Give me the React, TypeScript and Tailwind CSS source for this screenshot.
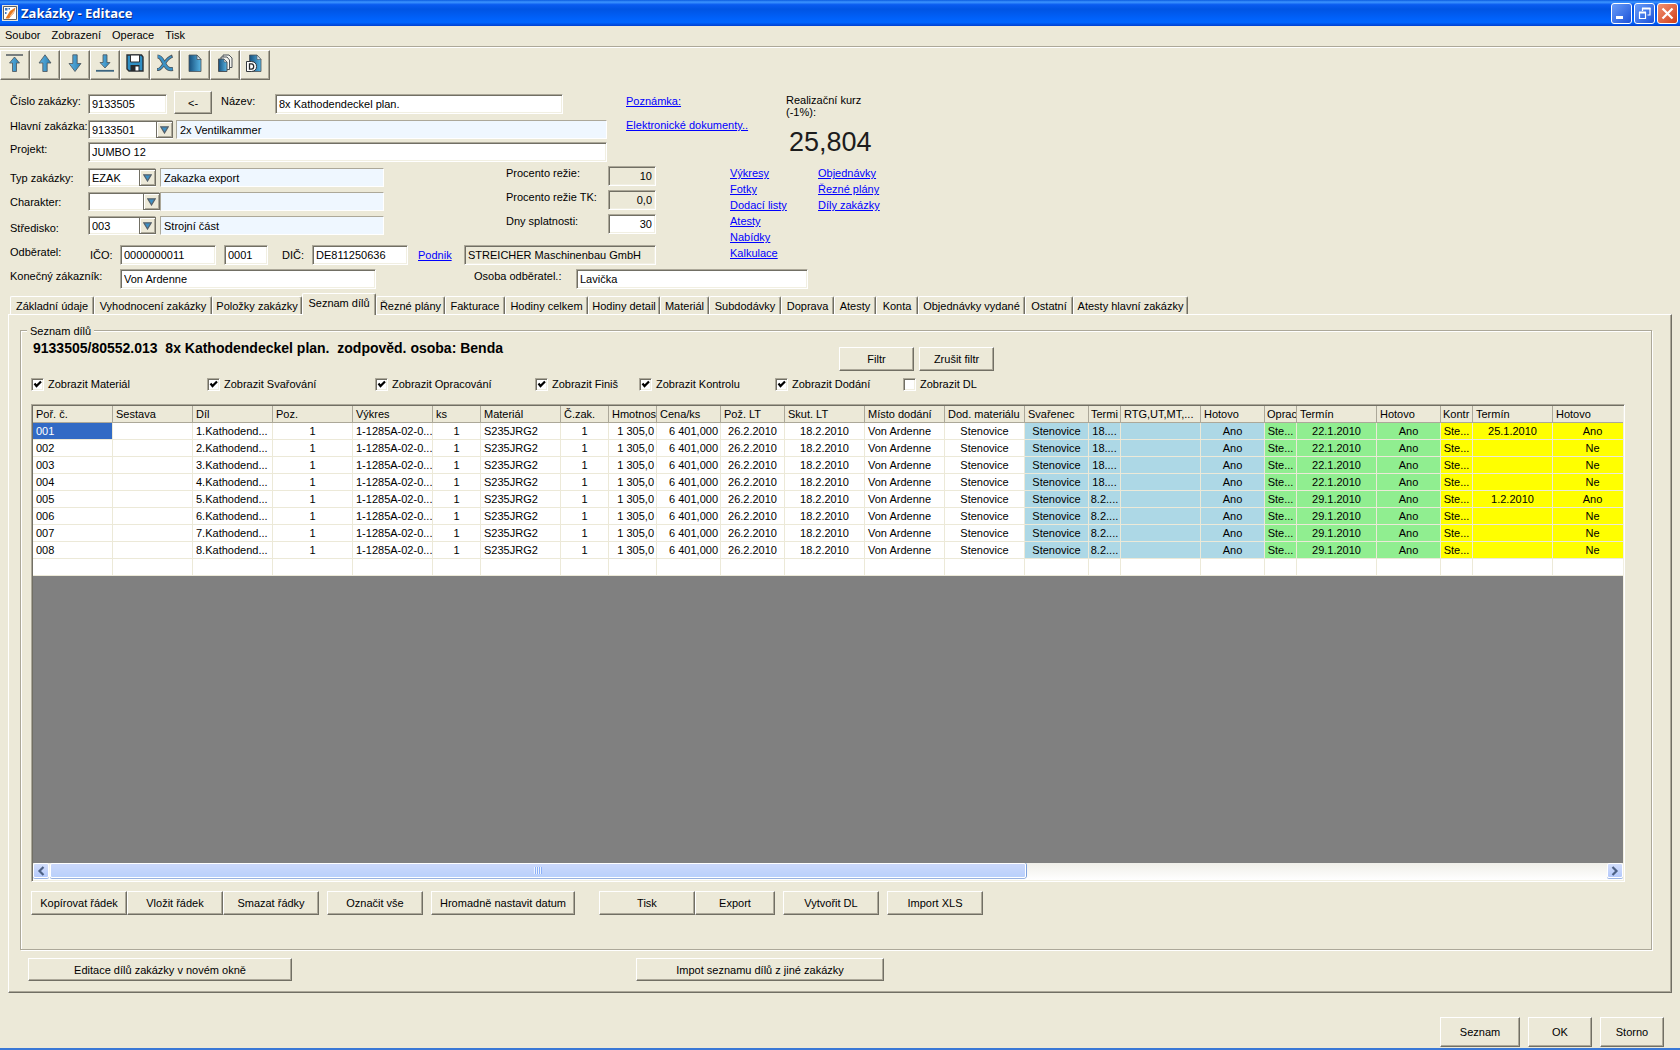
import React from "react";

const sunken =
  "border border-t-[#aca899] border-l-[#aca899] border-r-white border-b-white shadow-[inset_1px_1px_0_#716f64,inset_-1px_-1px_0_#f1efe2]";
const flat = "border border-t-[#aca899] border-l-[#aca899] border-r-white border-b-white bg-[#eff7ff]";
const raised =
  "border border-t-white border-l-white border-r-[#716f64] border-b-[#716f64] shadow-[inset_-1px_-1px_0_#aca899] bg-[#ece9d8]";

function Field({ id, value, className, label, variant = "edit" }: { id: string; value: string; className: string; label?: string; variant?: "edit" | "flat" | "locked" }) {
  const look = variant === "flat" ? flat : variant === "locked" ? sunken + " bg-[#ece9d8]" : sunken + " bg-white";
  return (
    <input id={id} aria-label={label} defaultValue={value} readOnly={variant !== "edit"} className={`${look} ${className} shrink-0 min-w-0 px-[3px] outline-none rounded-none`} />
  );
}

function Combo({ id, value, className }: { id: string; value: string; className: string }) {
  return (
    <div className={`relative h-[19px] shrink-0 ${className}`}>
      <select id={id} defaultValue={value} className={`${sunken} size-full appearance-none rounded-none bg-white pl-[3px] outline-none`}>
        <option>{value}</option>
      </select>
      <span className="pointer-events-none absolute inset-y-px right-0 flex w-[17px] items-center justify-center border border-[#716f64] bg-[#ece9d8] shadow-[inset_1px_1px_0_#ffffff,inset_-1px_-1px_0_#aca899]">
        <svg width="9" height="8" viewBox="0 0 9 8">
          <path d="M0.8 0.8h7.4L4.5 7z" fill="#3c8fc4" stroke="#56606a" strokeWidth="1.2" />
        </svg>
      </span>
    </div>
  );
}

function Btn({ children, className }: { children: React.ReactNode; className: string }) {
  return (
    <button type="button" className={`${raised} ${className} shrink-0 whitespace-nowrap text-center`}>
      {children}
    </button>
  );
}

function Link({ children }: { children: React.ReactNode }) {
  return (
    <a href="#" className="text-[#0000ff] underline whitespace-nowrap">
      {children}
    </a>
  );
}

const blue = "url(#steel)";
const edge = "#4d5358";

const toolIcons: { name: string; art: React.ReactNode }[] = [
  {
    name: "První",
    art: (
      <>
        <path d="M1 1h17" stroke="#5b6166" strokeWidth="1.6" />
        <path d="M9.500 3L14.500 9h-3v8.500h-4V9h-3z" fill={blue} stroke={edge} strokeWidth="0.8" />
      </>
    ),
  },
  { name: "Předchozí", art: <path d="M10 0.800L16 9h-3.800v8.500H7.800V9H4z" fill={blue} stroke={edge} strokeWidth="0.8" /> },
  { name: "Další", art: <path d="M10 17.500L16 9.500h-3.800V0.800H7.800v8.700H4z" fill={blue} stroke={edge} strokeWidth="0.8" /> },
  {
    name: "Poslední",
    art: (
      <>
        <path d="M1 16.800h18" stroke="#3c6580" strokeWidth="1.800" />
        <path d="M10 14L15 8.500h-3V0.800H8v7.700H5z" fill={blue} stroke={edge} strokeWidth="0.8" />
      </>
    ),
  },
  {
    name: "Uložit",
    art: (
      <>
        <path d="M2 1h14.500l1.500 2v14H4l-2-2z" fill="#2f8fc4" stroke="#2b2f33" strokeWidth="1.4" />
        <path d="M5.500 1h9v7h-9z" fill="#fff" stroke="#2b2f33" />
        <path d="M5.500 11h9v6h-9z" fill="#26292c" />
        <path d="M10.500 12.500h3v4h-3z" fill="#fff" />
      </>
    ),
  },
  {
    name: "Smazat",
    art: (
      <>
        <path d="M2.500 2.500C6.500 2.500 7.500 7 10 11s4 4.500 8 4" fill="none" stroke={edge} strokeWidth="4.200" />
        <path d="M17.500 2C12 4 10 8.500 7.500 12S4 15.500 2 15.500" fill="none" stroke={edge} strokeWidth="3.200" />
        <path d="M3 2.500C6.500 2.500 7.500 7 10 11s4 4.500 7.500 4" fill="none" stroke="#3d93c6" strokeWidth="2.600" />
        <path d="M16.500 2.500C12 4.500 10 8.500 7.500 12S4 15.500 2.500 15.500" fill="none" stroke="#3d93c6" strokeWidth="1.600" />
      </>
    ),
  },
  {
    name: "Nový",
    art: (
      <>
        <path d="M4 1h8l4 4.500V17.500H4z" fill="url(#page)" stroke={edge} strokeWidth="0.8" />
        <path d="M12 1l4 4.500h-4z" fill="#d7e9f3" stroke={edge} strokeWidth="0.8" />
      </>
    ),
  },
  {
    name: "Kopírovat",
    art: (
      <>
        <path d="M8 1h6l3 3v9.500H8z" fill="#f3f3ee" stroke={edge} />
        <path d="M6 3h6l2.500 3v9.500H6z" fill="#f3f3ee" stroke={edge} />
        <path d="M3.500 5h5.500l3 3v9.500H3.500z" fill="url(#page)" stroke={edge} />
        <path d="M9 5l3 3H9z" fill="#e7eff3" stroke={edge} strokeWidth="0.6" />
      </>
    ),
  },
  {
    name: "Doklad",
    art: (
      <>
        <path d="M4.500 1h7.500l4 4.500V17.500H4.500z" fill="url(#page)" stroke={edge} strokeWidth="0.8" />
        <path d="M12 1l4 4.500h-4z" fill="#d7e9f3" stroke={edge} strokeWidth="0.6" />
        <path d="M1.500 7.500H6.500q5 0.500 5 5t-5 5H1.500z" fill="#fff" stroke="#33383d" strokeWidth="1" />
        <path d="M4.500 9.800h2q2.200 0.200 2.200 2.700t-2.200 2.700h-2z" fill="#fff" stroke="#26292c" strokeWidth="1.300" />
      </>
    ),
  },
];

const tabs: [string, string][] = [
  ["Základní údaje", "w-[84px]"],
  ["Vyhodnocení zakázky", "w-[118px]"],
  ["Položky zakázky", "w-[90px]"],
  ["Seznam dílů", "w-[74px]"],
  ["Řezné plány", "w-[69px]"],
  ["Fakturace", "w-[60px]"],
  ["Hodiny celkem", "w-[83px]"],
  ["Hodiny detail", "w-[72px]"],
  ["Materiál", "w-[49px]"],
  ["Subdodávky", "w-[72px]"],
  ["Doprava", "w-[53px]"],
  ["Atesty", "w-[42px]"],
  ["Konta", "w-[42px]"],
  ["Objednávky vydané", "w-[107px]"],
  ["Ostatní", "w-[48px]"],
  ["Atesty hlavní zakázky", "w-[115px]"],
];

const checks: [string, string, boolean][] = [
  ["Zobrazit Materiál", "w-[176px]", true],
  ["Zobrazit Svařování", "w-[168px]", true],
  ["Zobrazit Opracování", "w-[160px]", true],
  ["Zobrazit Finiš", "w-[104px]", true],
  ["Zobrazit Kontrolu", "w-[136px]", true],
  ["Zobrazit Dodání", "w-[128px]", true],
  ["Zobrazit DL", "w-[100px]", false],
];

const W: Record<number, string> = { 32: "w-8", 48: "w-12", 64: "w-16", 80: "w-20" };
const cols: { h: string; w: number; a?: string; bg?: string }[] = [
  { h: "Poř. č.", w: 80 },
  { h: "Sestava", w: 80 },
  { h: "Díl", w: 80 },
  { h: "Poz.", w: 80, a: "text-center" },
  { h: "Výkres", w: 80 },
  { h: "ks", w: 48, a: "text-center" },
  { h: "Materiál", w: 80 },
  { h: "Č.zak.", w: 48, a: "text-center" },
  { h: "Hmotnos", w: 48, a: "text-right" },
  { h: "Cena/ks", w: 64, a: "text-right" },
  { h: "Pož. LT", w: 64, a: "text-center" },
  { h: "Skut. LT", w: 80, a: "text-center" },
  { h: "Místo dodání", w: 80 },
  { h: "Dod. materiálu", w: 80, a: "text-center" },
  { h: "Svařenec", w: 64, a: "text-center", bg: "bg-[#add8e6]" },
  { h: "Termi", w: 32, a: "text-center", bg: "bg-[#add8e6]" },
  { h: "RTG,UT,MT,...", w: 80, bg: "bg-[#add8e6]" },
  { h: "Hotovo", w: 64, a: "text-center", bg: "bg-[#add8e6]" },
  { h: "Oprac", w: 32, a: "text-center", bg: "bg-[#90ee90]" },
  { h: "Termín", w: 80, a: "text-center", bg: "bg-[#90ee90]" },
  { h: "Hotovo", w: 64, a: "text-center", bg: "bg-[#90ee90]" },
  { h: "Kontr", w: 32, a: "text-center", bg: "bg-[#ffff00]" },
  { h: "Termín", w: 80, a: "text-center", bg: "bg-[#ffff00]" },
  { h: "Hotovo", w: 80, a: "text-center", bg: "bg-[#ffff00]" },
];

const rows: string[][] = [1, 2, 3, 4, 5, 6, 7, 8].map((n) => [
  `00${n}`,
  "",
  `${n}.Kathodend...`,
  "1",
  "1-1285A-02-0...",
  "1",
  "S235JRG2",
  "1",
  "1 305,0",
  "6 401,000",
  "26.2.2010",
  "18.2.2010",
  "Von Ardenne",
  "Stenovice",
  "Stenovice",
  n < 5 ? "18...." : "8.2....",
  "",
  "Ano",
  "Ste...",
  n < 5 ? "22.1.2010" : "29.1.2010",
  "Ano",
  "Ste...",
  n === 1 ? "25.1.2010" : n === 5 ? "1.2.2010" : "",
  n === 1 || n === 5 ? "Ano" : "Ne",
]);

function cellPadding(c: { w: number; a?: string }) {
  if (c.w === 32) return "p-0";
  if (c.a === "text-right") return "p-0 pr-0.5";
  if (c.a === "text-center") return "p-0";
  return "p-0 pl-[3px]";
}

function PartsTable() {
  return (
    <table className="w-[1600px] table-fixed border-separate border-spacing-0">
      <colgroup>
        {cols.map((c, i) => (
          <col key={i} className={W[c.w]} />
        ))}
      </colgroup>
      <thead>
        <tr className="h-[17px]">
          {cols.map((c, i) => (
            <th
              key={i}
              className={`overflow-hidden border-r border-b border-[#aca899] bg-[#ece9d8] p-0 text-left font-normal leading-4 whitespace-nowrap ${c.w === 32 ? "pl-0.5" : "pl-[3px]"}`}
            >
              {c.h}
            </th>
          ))}
        </tr>
      </thead>
      <tbody>
        {rows.map((r, y) => (
          <tr key={y} className="h-[17px]">
            {r.map((v, i) => (
              <td
                key={i}
                className={`overflow-hidden border-r border-b border-[#ece9d8] leading-4 whitespace-nowrap ${cellPadding(cols[i])} ${cols[i].a ?? ""} ${
                  y === 0 && i === 0 ? "bg-[#316ac5] text-white" : cols[i].bg ?? "bg-white"
                }`}
              >
                {v}
              </td>
            ))}
          </tr>
        ))}
        <tr className="h-[17px]">
          {cols.map((_, i) => (
            <td key={i} className="border-r border-b border-[#ece9d8] bg-white p-0" />
          ))}
        </tr>
      </tbody>
    </table>
  );
}

const scrollBtn =
  "flex w-4 shrink-0 items-center justify-center rounded-xs border border-white bg-linear-to-b from-[#d3defc] to-[#b4c9fb] shadow-[0_1px_0_#9ab4e4]";

function ScrollBar() {
  return (
    <div className="flex h-[17px] shrink-0 gap-px bg-linear-to-b from-[#f0efe9] to-white pb-0.5">
      <button type="button" aria-label="Posunout vlevo" className={scrollBtn}>
        <svg width="8" height="10" viewBox="0 0 8 10">
          <path d="M6.500 1L2.500 5l4 4" fill="none" stroke="#4d6185" strokeWidth="2.200" />
        </svg>
      </button>
      <div className="flex w-[61.4%] items-center justify-center gap-px rounded-xs border border-white bg-linear-to-b from-[#cbd8fb] to-[#b9d0fb] shadow-[0_1px_0_#98b2e0,1px_0_0_#7da0dc]">
        {[0, 1, 2, 3].map((i) => (
          <span key={i} className="h-[7px] w-px bg-[#8cb0f8] shadow-[-1px_0_0_#eef4fe]" />
        ))}
      </div>
      <button type="button" aria-label="Posunout vpravo" className={`${scrollBtn} ml-auto`}>
        <svg width="8" height="10" viewBox="0 0 8 10">
          <path d="M1.500 1l4 4-4 4" fill="none" stroke="#4d6185" strokeWidth="2.200" />
        </svg>
      </button>
    </div>
  );
}

const capBtn = "flex size-[21px] items-center justify-center rounded-[3px] border border-white";

export default function App() {
  return (
    <div className="flex min-h-screen flex-col overflow-hidden border-b-2 border-[#3a78d6] bg-[#ece9d8] font-['Liberation_Sans',Arial,sans-serif] text-[11px] leading-[14px] text-black">
      <svg width="0" height="0" className="absolute">
        <defs>
          <linearGradient id="steel" x1="0" x2="1" y1="0" y2="0">
            <stop offset="0" stopColor="#5fb4e4" />
            <stop offset="1" stopColor="#2a80b4" />
          </linearGradient>
          <linearGradient id="page" x1="0" x2="1" y1="0" y2="0">
            <stop offset="0" stopColor="#174f7c" />
            <stop offset="1" stopColor="#56b4e4" />
          </linearGradient>
        </defs>
      </svg>

      <header className="flex h-[26px] shrink-0 items-center bg-[linear-gradient(to_bottom,#0a5be0_0%,#3d95ff_8%,#0a5cf0_18%,#0054e3_35%,#0062fb_72%,#0066ff_86%,#0040d0_100%)] px-0.5">
        <svg width="16" height="16" viewBox="0 0 16 16" aria-hidden="true">
          <path d="M0 0h16v16H0z" fill="#e9e6da" />
          <path d="M1.500 1.500h13v13h-13z" fill="#fff" stroke="#5c6068" />
          <path d="M3 3h2.500v2.500H3zM6.500 3H8v1.500H6.500zM3 7h1.500v2H3z" fill="#3a78c8" />
          <path d="M3.500 13.500L8 6l5.500-3.500L12 8l-5 5.500z" fill="#e8791e" />
          <path d="M7.500 11.500l4.500-6 1 0.800-3.800 5.200z" fill="#f9c49a" />
        </svg>
        <h1 className="ml-[3px] flex-1 font-['Open_Sans','Noto_Sans',sans-serif] text-[13px] leading-5 font-bold text-white [text-shadow:1px_1px_0_#0a2a80]">Zakázky - Editace</h1>
        <div className="flex gap-0.5">
          <button type="button" aria-label="Minimalizovat" className={`${capBtn} bg-linear-to-br from-[#6a9cf8] to-[#1c50d8]`}>
            <svg width="15" height="15" viewBox="0 0 15 15">
              <path d="M2 11.500h7" stroke="#fff" strokeWidth="3" />
            </svg>
          </button>
          <button type="button" aria-label="Obnovit" className={`${capBtn} bg-linear-to-br from-[#6a9cf8] to-[#1c50d8]`}>
            <svg width="15" height="15" viewBox="0 0 15 15" fill="none" stroke="#fff">
              <path d="M5.500 5V2.500h7.500V9h-2.500" strokeWidth="1.200" />
              <path d="M5 2.500h8.500" strokeWidth="2" />
              <path d="M2.500 6.500h6v6h-6z" strokeWidth="1.200" />
              <path d="M2 6.500h7" strokeWidth="2" />
            </svg>
          </button>
          <button type="button" aria-label="Zavřít" className={`${capBtn} bg-linear-to-br from-[#f09070] to-[#d03c10]`}>
            <svg width="15" height="15" viewBox="0 0 15 15">
              <path d="M2.500 2.500l10 10M12.500 2.500l-10 10" stroke="#fff" strokeWidth="2.200" />
            </svg>
          </button>
        </div>
      </header>

      <nav className="flex h-[21px] shrink-0 items-start gap-[11px] border-b border-[#aca899] px-[5px] pt-0.5 shadow-[0_1px_0_#ffffff]">
        {["Soubor", "Zobrazení", "Operace", "Tisk"].map((m) => (
          <button key={m} type="button">
            {m}
          </button>
        ))}
      </nav>

      <div className="mt-[3px] flex shrink-0">
        {toolIcons.map((t) => (
          <button key={t.name} type="button" aria-label={t.name} className={`${raised} flex h-[30px] w-[30px] justify-center pt-[3px]`}>
            <svg width="20" height="20" viewBox="0 0 20 20">
              {t.art}
            </svg>
          </button>
        ))}
      </div>

      <main className="flex flex-1 flex-col pt-[14px]">
        <div className="flex pl-2.5">
          <div className="flex w-[597px] shrink-0 flex-col">
            <div className="flex h-[26px] items-start">
              <label htmlFor="cislo" className="w-[78px] shrink-0">Číslo zakázky:</label>
              <Field id="cislo" value="9133505" className="h-5 w-[79px]" />
              <Btn className="-mt-[3px] ml-[7px] h-[23px] w-[38px]">&lt;-</Btn>
              <label htmlFor="nazev" className="ml-[9px] w-[54px]">Název:</label>
              <Field id="nazev" value="8x Kathodendeckel plan." className="h-5 w-[288px]" />
            </div>
            <div className="flex h-[22px] items-start">
              <label htmlFor="hlavni" className="w-[78px] shrink-0 leading-3 whitespace-nowrap">Hlavní zakázka:</label>
              <Combo id="hlavni" value="9133501" className="w-[85px]" />
              <Field id="hlavni-n" label="Název hlavní zakázky" value="2x Ventilkammer" variant="flat" className="ml-[3px] h-[19px] flex-1" />
            </div>
            <div className="flex h-[26px] items-start">
              <label htmlFor="projekt" className="w-[78px] shrink-0">Projekt:</label>
              <Field id="projekt" value="JUMBO 12" className="h-5 flex-1" />
            </div>
          </div>
          <div className="ml-[19px] flex w-40 shrink-0 flex-col items-start gap-[10px]">
            <Link>Poznámka:</Link>
            <Link>Elektronické dokumenty..</Link>
          </div>
          <div className="w-24">
            <p className="leading-3">Realizační kurz (-1%):</p>
            <output className="mt-2 block pl-[3px] text-[27px] leading-8 text-[#1c1c1c]">25,804</output>
          </div>
        </div>

        <div className="flex pl-2.5">
          <div className="w-[646px] shrink-0">
            <div className="flex">
              <div className="flex w-[496px] flex-col gap-[5px]">
                <div className="flex items-center">
                  <label htmlFor="typ" className="w-[78px]">Typ zakázky:</label>
                  <Combo id="typ" value="EZAK" className="w-[68px]" />
                  <Field id="typ-n" label="Název typu" value="Zakazka export" variant="flat" className="ml-1 h-[19px] w-56" />
                </div>
                <div className="flex items-center">
                  <label htmlFor="char" className="w-[78px]">Charakter:</label>
                  <Combo id="char" value="" className="w-[72px]" />
                  <Field id="char-n" label="Název charakteru" value="" variant="flat" className="h-[19px] w-56" />
                </div>
                <div className="flex items-end">
                  <label htmlFor="stred" className="w-[78px]">Středisko:</label>
                  <Combo id="stred" value="003" className="w-[68px]" />
                  <Field id="stred-n" label="Název střediska" value="Strojní část" variant="flat" className="ml-1 h-[19px] w-56" />
                </div>
              </div>
              <div className="-mt-0.5 flex flex-1 flex-col gap-1">
                <div className="flex justify-between">
                  <label htmlFor="rezie">Procento režie:</label>
                  <Field id="rezie" value="10" variant="locked" className="h-5 w-12 text-right" />
                </div>
                <div className="flex justify-between">
                  <label htmlFor="rezie-tk">Procento režie TK:</label>
                  <Field id="rezie-tk" value="0,0" variant="locked" className="h-5 w-12 text-right" />
                </div>
                <div className="flex justify-between">
                  <label htmlFor="dny">Dny splatnosti:</label>
                  <Field id="dny" value="30" className="h-5 w-12 text-right" />
                </div>
              </div>
            </div>
            <div className="mt-[10px] flex items-center">
              <span className="w-20 self-start">Odběratel:</span>
              <label htmlFor="ico" className="w-[30px]">IČO:</label>
              <Field id="ico" value="0000000011" className="h-5 w-[96px]" />
              <Field id="ico2" label="Pobočka" value="0001" className="ml-2 h-5 w-11" />
              <label htmlFor="dic" className="ml-[14px] w-[30px]">DIČ:</label>
              <Field id="dic" value="DE811250636" className="h-5 w-24" />
              <span className="ml-[10px] w-[46px]">
                <Link>Podnik</Link>
              </span>
              <Field id="podnik" label="Podnik" value="STREICHER Maschinenbau GmbH" variant="locked" className="h-5 flex-1" />
            </div>
          </div>
          <div className="-mt-[3px] ml-[74px] flex leading-4">
            <div className="flex w-[88px] flex-col items-start">
              {["Výkresy", "Fotky", "Dodací listy", "Atesty", "Nabídky", "Kalkulace"].map((l) => (
                <Link key={l}>{l}</Link>
              ))}
            </div>
            <div className="flex flex-col items-start">
              {["Objednávky", "Řezné plány", "Díly zakázky"].map((l) => (
                <Link key={l}>{l}</Link>
              ))}
            </div>
          </div>
        </div>

        <div className="mt-1 flex items-start pl-2.5">
          <label htmlFor="konec" className="w-[110px]">Konečný zákazník:</label>
          <Field id="konec" value="Von Ardenne" className="h-5 w-64" />
          <label htmlFor="osoba" className="ml-[98px] w-[102px]">Osoba odběratel.:</label>
          <Field id="osoba" value="Lavička" className="h-5 w-[232px]" />
        </div>

        <div role="tablist" className="relative z-10 mt-1 flex items-end pl-2.5">
          {tabs.map(([t, w]) => {
            const on = t === "Seznam dílů";
            return (
              <button
                key={t}
                type="button"
                role="tab"
                aria-selected={on}
                className={`${w} shrink-0 whitespace-nowrap rounded-t-xs border-t border-l border-t-white border-l-white border-r border-r-[#716f64] bg-[#ece9d8] text-center shadow-[inset_-1px_0_0_#aca899] ${on ? "-mb-px h-[22px] pb-1" : "h-[18px]"}`}
              >
                {t}
              </button>
            );
          })}
        </div>

        <section className="mr-2 ml-2 flex flex-1 flex-col border border-t-white border-l-white border-r-[#716f64] border-b-[#716f64] px-[11px] pt-[15px] pb-[11px] shadow-[inset_-1px_-1px_0_#aca899]">
          <div role="group" aria-labelledby="parts-title" className="mr-2 flex min-w-0 flex-1 flex-col border border-[#aca899] pr-[26px] pb-[34px] pl-[10px] shadow-[1px_1px_0_#ffffff,inset_1px_1px_0_#ffffff]">
            <span id="parts-title" className="-mt-[7px] -ml-1 self-start bg-[#ece9d8] px-[3px]">
              Seznam dílů
            </span>
            <h2 className="pl-0.5 text-[14px] leading-5 font-bold whitespace-pre">{"9133505/80552.013  8x Kathodendeckel plan.  zodpověd. osoba: Benda"}</h2>
            <div className="-mt-[11px] flex gap-[5px] pl-[808px]">
              <Btn className="h-6 w-[75px]">Filtr</Btn>
              <Btn className="h-6 w-[75px]">Zrušit filtr</Btn>
            </div>
            <div className="mt-1.5 flex">
              {checks.map(([t, w, on]) => (
                <label key={t} className={`${w} flex shrink-0 items-center gap-1`}>
                  <span className={`${sunken} relative block size-[13px] bg-white`}>
                    <input type="checkbox" defaultChecked={on} className="peer absolute inset-0 size-full appearance-none" />
                    <svg viewBox="0 0 11 11" className="pointer-events-none absolute inset-0 hidden size-full peer-checked:block">
                      <path d="M2.500 4.500l2 2.500 4.500-4.500" fill="none" stroke="#000" strokeWidth="2.200" />
                    </svg>
                  </span>
                  {t}
                </label>
              ))}
            </div>
            <div className={`${sunken} mt-[13px] flex flex-1 flex-col bg-[#808080] p-px`}>
              <div className="flex-1 overflow-hidden">
                <PartsTable />
              </div>
              <ScrollBar />
            </div>
            <div className="mt-[9px] flex">
              <Btn className="h-6 w-24">Kopírovat řádek</Btn>
              <Btn className="h-6 w-24">Vložit řádek</Btn>
              <Btn className="h-6 w-24">Smazat řádky</Btn>
              <Btn className="ml-2 h-6 w-24">Označit vše</Btn>
              <Btn className="ml-2 h-6 w-36">Hromadně nastavit datum</Btn>
              <Btn className="ml-6 h-6 w-24">Tisk</Btn>
              <Btn className="h-6 w-20">Export</Btn>
              <Btn className="ml-2 h-6 w-24">Vytvořit DL</Btn>
              <Btn className="ml-2 h-6 w-24">Import XLS</Btn>
            </div>
          </div>
          <div className="mt-2 flex gap-[344px] pl-2">
            <Btn className="h-[23px] w-[264px]">Editace dílů zakázky v novém okně</Btn>
            <Btn className="h-[23px] w-[248px]">Impot seznamu dílů z jiné zakázky</Btn>
          </div>
        </section>

        <footer className="mt-6 mb-px flex justify-end gap-2 pr-4">
          <Btn className="h-[30px] w-20">Seznam</Btn>
          <Btn className="h-[30px] w-16">OK</Btn>
          <Btn className="h-[30px] w-16">Storno</Btn>
        </footer>
      </main>
    </div>
  );
}
